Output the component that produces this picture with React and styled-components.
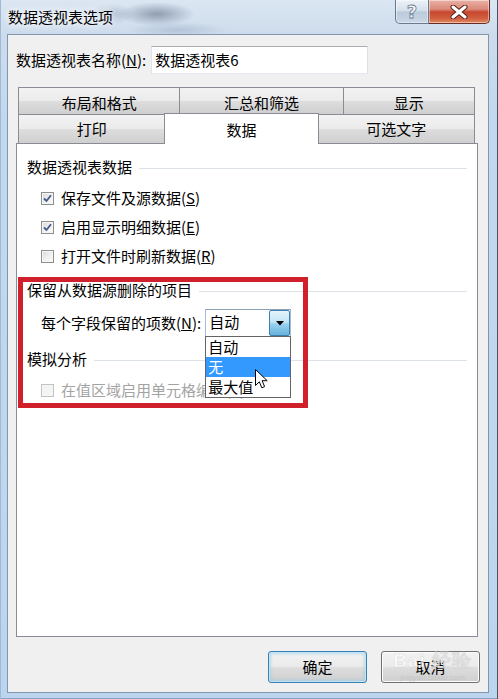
import React from "react";
import styled, { createGlobalStyle } from "styled-components";

const Global = createGlobalStyle`
  html, body { margin: 0; padding: 0; overflow: hidden; }
  body {
    font-family: "Noto Sans CJK SC", "Noto Sans", sans-serif;
    font-size: 15px;
    color: #000;
  }
`;

const Window = styled.div`
  width: 498px;
  height: 699px;
  box-sizing: border-box;
  display: flex;
  flex-direction: column;
  padding: 0 8px 6px 7px;
  border-right: 1px solid #44546a;
  background: linear-gradient(180deg, #dbe6f2 0, #cddcec 34px, #c2d8ef 120px, #bcd5ee 100%);
  box-shadow: inset 1px 0 0 #9fb9d6, inset 0 -1px 0 #8aa3c0;
`;

const TitleBar = styled.div`
  height: 34px;
  flex-shrink: 0;
  display: flex;
  justify-content: space-between;
  align-items: flex-start;
  background:
    radial-gradient(ellipse 38px 12px at 150px 14px, rgba(60, 75, 100, 0.45), transparent),
    radial-gradient(ellipse 22px 10px at 105px 14px, rgba(90, 110, 140, 0.3), transparent),
    radial-gradient(ellipse 50px 8px at 170px 30px, rgba(120, 140, 170, 0.3), transparent);
`;

const Title = styled.div`
  padding: 7px 0 0 1px;
  line-height: 20px;
  text-shadow: 0 0 6px #fff, 0 0 10px #fff;
`;

const WinButtons = styled.div`
  display: flex;
  margin-right: -1px;
`;

const CaptionButton = styled.div`
  width: ${p => p.w}px;
  height: 24px;
  box-sizing: border-box;
  display: flex;
  align-items: center;
  justify-content: center;
  border: 1px solid ${p => (p.close ? "#6b2b22" : "#6a7a8e")};
  border-top: none;
  border-left-width: ${p => (p.close ? 0 : 1)}px;
  border-radius: ${p => (p.close ? "0 0 5px 0" : "0 0 0 5px")};
  background: ${p =>
    p.close
      ? "linear-gradient(180deg, #eab1a6 0, #d98a7a 40%, #c7462f 52%, #d0603f 80%, #e08a60 100%)"
      : "linear-gradient(180deg, #edf2f8 0, #d5e0ec 45%, #bccbdc 52%, #c8d6e6 100%)"};
  box-shadow: inset 0 0 0 1px rgba(255, 255, 255, 0.45);
`;

const HelpGlyph = styled.span`
  font-family: "DejaVu Sans", sans-serif;
  font-weight: bold;
  font-size: 18px;
  line-height: 20px;
  color: #f7f9fc;
  -webkit-text-stroke: 0.8px #6a7b90;
`;

const Client = styled.div`
  flex: 1;
  min-height: 0;
  display: flex;
  flex-direction: column;
  background: #f0f0f0;
  border: 1px solid #8396ad;
  padding: 11px 10px 9px 8px;
`;

const NameRow = styled.div`
  display: flex;
  align-items: center;
  gap: 5px;
  height: 28px;
`;

const Label = styled.span`
  line-height: 20px;
  white-space: nowrap;
`;

const TextBox = styled.div`
  width: 217px;
  height: 28px;
  box-sizing: border-box;
  background: #fff;
  border: 1px solid #abadb3;
  border-color: #abadb3 #dbdfe6 #e3e9ef #e2e3ea;
  padding: 3px 3px;
  line-height: 20px;
`;

const Tabs = styled.div`
  margin-top: 13px;
  display: flex;
  flex-direction: column;
  padding: 0 3px 0 2px;
`;

const TabRow = styled.div`
  display: flex;
  align-items: flex-end;
  height: ${p => p.h}px;
`;

const Tab = styled.div`
  width: ${p => p.w}px;
  height: ${p => (p.active ? 31 : p.h)}px;
  box-sizing: border-box;
  margin-left: ${p => (p.first ? 0 : -1)}px;
  margin-bottom: ${p => (p.active ? -1 : 0)}px;
  position: relative;
  z-index: ${p => (p.active ? 2 : 1)};
  border: 1px solid #898c95;
  border-bottom: none;
  background: ${p =>
    p.active
      ? "#fff"
      : "linear-gradient(180deg, #f2f2f2 0, #ebebeb 48%, #dddddd 52%, #cfcfcf 100%)"};
  padding-top: ${p => p.pt}px;
  line-height: 20px;
  text-align: center;
`;

const Panel = styled.div`
  flex: 1;
  min-height: 0;
  position: relative;
  background: #fff;
  border: 1px solid #898c95;
  padding: 13px 10px 0 10px;
`;

const SectionTitle = styled.div`
  display: flex;
  align-items: center;
  height: 20px;
  line-height: 20px;
  margin-top: ${p => p.mt || 0}px;
  white-space: nowrap;
  &::after {
    content: "";
    flex: 1;
    height: 1px;
    margin-left: 7px;
    margin-top: 2px;
    background: #dce2e7;
  }
`;

const Row = styled.div`
  display: flex;
  align-items: center;
  gap: ${p => p.gap || 7}px;
  height: ${p => p.h || 20}px;
  line-height: 20px;
  padding-left: 14px;
  margin-top: ${p => p.mt || 0}px;
  color: ${p => (p.disabled ? "#a3a3a3" : "#000")};
  white-space: nowrap;
`;

const Box = styled.span`
  width: 13px;
  height: 13px;
  box-sizing: border-box;
  flex-shrink: 0;
  display: flex;
  align-items: center;
  justify-content: center;
  border: 1px solid ${p => (p.disabled ? "#c2c2c2" : "#8e8f8f")};
  background: ${p =>
    p.disabled
      ? "#f4f4f4"
      : "linear-gradient(135deg, #d8d8d8 0, #eeeeee 50%, #fbfbfb 100%)"};
  box-shadow: inset 0 0 0 1px #f6f6f6;
`;

const Combo = styled.div`
  position: relative;
  margin-left: -1px;
  width: 86px;
  height: 28px;
  box-sizing: border-box;
  display: flex;
  align-items: stretch;
  background: #fff;
  border: 1px solid #8c9db3;
  border-color: #8ca0b8 #a7bbd1 #b7c9dc #a7bbd1;
`;

const ComboText = styled.span`
  flex: 1;
  padding-left: 3px;
  line-height: 24px;
`;

const DropButton = styled.span`
  width: 21px;
  display: flex;
  align-items: center;
  justify-content: center;
  box-sizing: border-box;
  border: 1px solid #3c7fb1;
  border-radius: 2px;
  background: linear-gradient(180deg, #e5f4fc 0, #c4e5f6 45%, #98d1ef 55%, #68b3db 100%);
`;

const List = styled.div`
  position: absolute;
  top: 100%;
  left: -1px;
  width: 86px;
  box-sizing: border-box;
  background: #fff;
  border: 1px solid #646464;
  z-index: 5;
`;

const Item = styled.div`
  height: 20px;
  line-height: 20px;
  padding-left: 2px;
  background: ${p => (p.selected ? "#3399ff" : "#fff")};
  color: ${p => (p.selected ? "#fff" : "#000")};
`;

const Cursor = styled.svg`
  position: absolute;
  left: 49px;
  top: 32px;
  z-index: 6;
`;

const Highlight = styled.div`
  position: absolute;
  left: 1px;
  top: 133px;
  width: 290px;
  height: 131px;
  box-sizing: border-box;
  border: 5px solid #d0202c;
  pointer-events: none;
  z-index: 3;
`;

const ButtonRow = styled.div`
  margin-top: 14px;
  margin-right: -2px;
  display: flex;
  justify-content: flex-end;
  gap: 14px;
  position: relative;
`;

const Button = styled.div`
  width: 99px;
  height: 32px;
  box-sizing: border-box;
  display: flex;
  align-items: center;
  justify-content: center;
  border-radius: 3px;
  border: 1px solid ${p => (p.primary ? "#3c7fb1" : "#707070")};
  background: linear-gradient(180deg, #f2f2f2 0, #ebebeb 48%, #dddddd 52%, #cfcfcf 100%);
  box-shadow: ${p =>
    p.primary
      ? "inset 0 0 0 1px #bfe4f8, inset 0 0 3px 2px rgba(140, 200, 235, 0.55)"
      : "inset 0 0 0 1px #fcfcfc"};
  line-height: 20px;
`;

const Watermark = styled.div`
  position: absolute;
  right: 8px;
  top: -2px;
  display: flex;
  flex-direction: column;
  align-items: center;
  color: rgba(255, 255, 255, 0.7);
  -webkit-text-stroke: 0.5px rgba(170, 170, 170, 0.35);
  font-family: "Liberation Sans", sans-serif;
  pointer-events: none;
`;

const MarkBig = styled.span`
  font-size: 19px;
  font-weight: bold;
  line-height: 24px;
  letter-spacing: 1px;
`;

const MarkSmall = styled.span`
  font-size: 8px;
  line-height: 10px;
  -webkit-text-stroke: 0;
  color: rgba(180, 180, 180, 0.45);
`;

const Check = () => (
  <svg width="9" height="9" viewBox="0 0 9 9">
    <path d="M1 4.5 L3.5 7 L8 1.2" fill="none" stroke="#45598a" strokeWidth="1.8" />
  </svg>
);

const CheckRow = ({ checked, disabled, mt, children }) => (
  <Row mt={mt} disabled={disabled}>
    <Box disabled={disabled}>{checked && <Check />}</Box>
    <span>{children}</span>
  </Row>
);

const row1 = [
  { label: "布局和格式", w: 163 },
  { label: "汇总和筛选", w: 165 },
  { label: "显示", w: 133 },
];
const row2 = [
  { label: "打印", w: 148 },
  { label: "数据", w: 155, active: true },
  { label: "可选文字", w: 158 },
];

export default function App() {
  return (
    <>
      <Global />
      <Window>
        <TitleBar>
          <Title>数据透视表选项</Title>
          <WinButtons>
            <CaptionButton w={34}>
              <HelpGlyph>?</HelpGlyph>
            </CaptionButton>
            <CaptionButton w={61} close>
              <svg width="18" height="14" viewBox="0 0 18 14">
                <path d="M3 2 L15 12 M15 2 L3 12" stroke="#5a2018" strokeWidth="5" strokeLinecap="round" />
                <path d="M3 2 L15 12 M15 2 L3 12" stroke="#fff" strokeWidth="3" strokeLinecap="round" />
              </svg>
            </CaptionButton>
          </WinButtons>
        </TitleBar>

        <Client>
          <NameRow>
            <Label>
              数据透视表名称(<u>N</u>):
            </Label>
            <TextBox>数据透视表6</TextBox>
          </NameRow>

          <Tabs>
            <TabRow h={27}>
              {row1.map((t, i) => (
                <Tab key={t.label} w={t.w} h={27} pt={5} first={i === 0}>
                  {t.label}
                </Tab>
              ))}
            </TabRow>
            <TabRow h={29}>
              {row2.map((t, i) => (
                <Tab key={t.label} w={t.w} h={29} pt={t.active ? 6 : 4} first={i === 0} active={t.active}>
                  {t.label}
                </Tab>
              ))}
            </TabRow>
          </Tabs>

          <Panel>
            <SectionTitle>数据透视表数据</SectionTitle>
            <CheckRow checked mt={11}>
              保存文件及源数据(<u>S</u>)
            </CheckRow>
            <CheckRow checked mt={9}>
              启用显示明细数据(<u>E</u>)
            </CheckRow>
            <CheckRow mt={9}>
              打开文件时刷新数据(<u>R</u>)
            </CheckRow>

            <SectionTitle mt={14}>保留从数据源删除的项目</SectionTitle>
            <Row h={28} mt={9} gap={5}>
              <span>
                每个字段保留的项数(<u>N</u>):
              </span>
              <Combo>
                <ComboText>自动</ComboText>
                <DropButton>
                  <svg width="8" height="5" viewBox="0 0 8 5">
                    <path d="M0 0 H8 L4 4.5 Z" fill="#000" />
                  </svg>
                </DropButton>
                <List>
                  <Item>自动</Item>
                  <Item selected>无</Item>
                  <Item>最大值</Item>
                  <Cursor width="14" height="21" viewBox="0 0 14 21">
                    <path
                      d="M0.5 0.5 L0.5 16.5 L4.3 12.8 L6.8 18.8 L9.6 17.6 L7.1 11.7 L12.2 11.7 Z"
                      fill="#fff"
                      stroke="#000"
                      strokeWidth="1"
                    />
                  </Cursor>
                </List>
              </Combo>
            </Row>

            <SectionTitle mt={12}>模拟分析</SectionTitle>
            <CheckRow disabled mt={11}>
              在值区域启用单元格编辑(<u>E</u>)
            </CheckRow>

            <Highlight />
          </Panel>

          <ButtonRow>
            <Button primary>确定</Button>
            <Button>取消</Button>
            <Watermark>
              <MarkBig>Bai 经验</MarkBig>
              <MarkSmall>jingyan.baidu.com</MarkSmall>
            </Watermark>
          </ButtonRow>
        </Client>
      </Window>
    </>
  );
}
